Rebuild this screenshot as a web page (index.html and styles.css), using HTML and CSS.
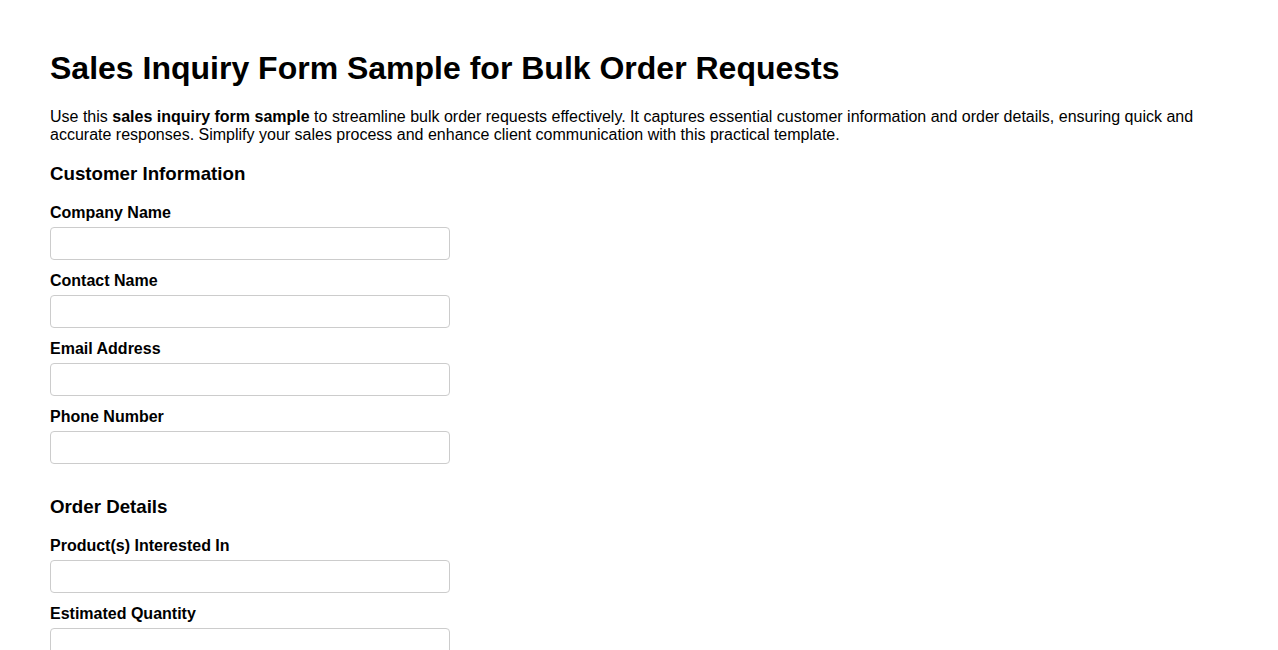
FILE: index.html
```html
<!DOCTYPE html>
<html lang="en">
<head>
<meta charset="utf-8">
<title>Sales Inquiry Form Sample for Bulk Order Requests</title>
<link rel="stylesheet" href="styles.css">
</head>
<body>
<main class="page">
  <h1 class="title">Sales Inquiry Form Sample for Bulk Order Requests</h1>
  <p class="intro">Use this <strong>sales inquiry form sample</strong> to streamline bulk order requests effectively. It captures essential customer information and order details, ensuring quick and accurate responses. Simplify your sales process and enhance client communication with this practical template.</p>
  <form class="form">
    <h3 class="section-title">Customer Information</h3>
    <div class="field">
      <label class="label" for="company">Company Name</label>
      <input class="input" id="company" type="text">
    </div>
    <div class="field">
      <label class="label" for="contact">Contact Name</label>
      <input class="input" id="contact" type="text">
    </div>
    <div class="field">
      <label class="label" for="email">Email Address</label>
      <input class="input" id="email" type="email">
    </div>
    <div class="field">
      <label class="label" for="phone">Phone Number</label>
      <input class="input" id="phone" type="tel">
    </div>

    <h3 class="section-title section-title--next">Order Details</h3>
    <div class="field">
      <label class="label" for="products">Product(s) Interested In</label>
      <input class="input" id="products" type="text">
    </div>
    <div class="field">
      <label class="label" for="quantity">Estimated Quantity</label>
      <input class="input" id="quantity" type="text">
    </div>
    <div class="field">
      <label class="label" for="delivery">Desired Delivery Date</label>
      <input class="input" id="delivery" type="text">
    </div>
    <div class="field">
      <label class="label" for="notes">Additional Requirements</label>
      <textarea class="input textarea" id="notes"></textarea>
    </div>
  </form>
</main>
</body>
</html>
```

FILE: styles.css
```css
html, body {
  margin: 0;
  padding: 0;
  background: #ffffff;
}

body {
  font-family: "Liberation Sans", Arial, sans-serif;
  font-size: 16px;
  color: #000000;
}

.page {
  padding: 29px 50px 40px;
}

.title {
  font-size: 32px;
  font-weight: bold;
  margin: 21.44px 0 20.44px;
}

.intro {
  margin: 16px 0;
  line-height: normal;
}

.form {
  display: flex;
  flex-direction: column;
  margin-top: 19px;
}

.section-title {
  font-size: 18.72px;
  font-weight: bold;
  margin: 0 0 19.5px;
}

.section-title--next {
  margin-top: 19.9px;
  margin-bottom: 18.5px;
}

.field {
  display: flex;
  flex-direction: column;
  align-items: flex-start;
  margin-bottom: 12px;
}

.label {
  font-weight: bold;
  margin-bottom: 5px;
}

.input {
  box-sizing: border-box;
  width: 400px;
  height: 33px;
  padding: 8px;
  border: 1px solid #cccccc;
  border-radius: 4px;
  font-family: "Liberation Sans", Arial, sans-serif;
  font-size: 13.33px;
  background: #ffffff;
}

.textarea {
  height: 80px;
  resize: vertical;
}
```
